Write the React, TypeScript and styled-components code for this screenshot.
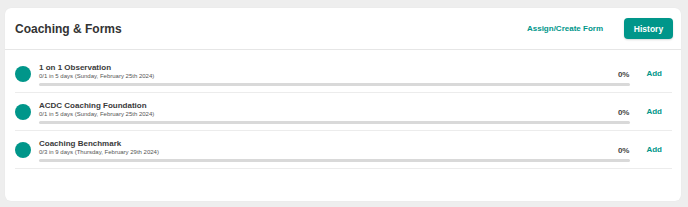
import React from "react";
import styled, { createGlobalStyle } from "styled-components";

const Global = createGlobalStyle`
  html, body { margin: 0; padding: 0; background: #eeeeee; }
  body { font-family: "Liberation Sans", Arial, sans-serif; }
  * { box-sizing: border-box; }
`;

const TEAL = "#00968a";

const Page = styled.div`
  padding: 8px 7px 6px 5px;
`;

const Card = styled.section`
  background: #ffffff;
  border-radius: 6px;
  height: 193px;
  box-shadow: 0 0 1px rgba(0, 0, 0, 0.08);
  display: flex;
  flex-direction: column;
`;

const Header = styled.header`
  height: 42px;
  border-bottom: 1px solid #e6e6e6;
  display: flex;
  align-items: center;
  padding: 0 8px 0 10px;
`;

const Title = styled.h2`
  margin: 0;
  flex: 1;
  font-size: 12px;
  font-weight: 700;
  color: #333333;
`;

const LinkButton = styled.button`
  border: 0;
  background: none;
  padding: 0;
  font-family: inherit;
  font-size: 8px;
  font-weight: 700;
  color: ${TEAL};
  cursor: pointer;
`;

const PrimaryButton = styled.button`
  margin-left: 21px;
  width: 49px;
  height: 21px;
  border: 0;
  border-radius: 4px;
  background: ${TEAL};
  color: #ffffff;
  font-family: inherit;
  font-size: 8.5px;
  font-weight: 700;
  box-shadow: 0 1px 2px rgba(0, 0, 0, 0.15);
`;

const List = styled.div`
  padding: 5px 9px 0 10px;
`;

const Row = styled.div`
  height: 38px;
  border-bottom: 1px solid #ececec;
  display: flex;
  align-items: center;
`;

const Dot = styled.span`
  width: 16px;
  height: 16px;
  border-radius: 50%;
  background: ${TEAL};
  flex: none;
  margin-right: 8px;
`;

const Body = styled.div`
  flex: 1;
  display: flex;
  flex-direction: column;
  margin-top: 2px;
`;

const TopLine = styled.div`
  display: flex;
  align-items: flex-end;
`;

const Texts = styled.div`
  flex: 1;
  display: flex;
  flex-direction: column;
`;

const ItemTitle = styled.div`
  font-size: 8px;
  line-height: 10px;
  font-weight: 700;
  color: #3a3a3a;
`;

const ItemSub = styled.div`
  font-size: 6px;
  line-height: 6px;
  color: #555555;
`;

const Percent = styled.div`
  font-size: 8px;
  line-height: 10px;
  font-weight: 700;
  color: #444444;
  margin-right: 1px;
  margin-bottom: -1px;
`;

const Bar = styled.div`
  margin-top: 4px;
  height: 3px;
  border-radius: 2px;
  background: #d9d9d9;
`;

const AddLink = styled(LinkButton)`
  font-size: 8px;
  margin: 0 10px 0 16px;
`;

const items = [
  { title: "1 on 1 Observation", sub: "0/1 in 5 days (Sunday, February 25th 2024)" },
  { title: "ACDC Coaching Foundation", sub: "0/1 in 5 days (Sunday, February 25th 2024)" },
  { title: "Coaching Benchmark", sub: "0/3 in 9 days (Thursday, February 29th 2024)" },
];

export default function App() {
  return (
    <>
      <Global />
      <Page>
        <Card>
          <Header>
            <Title>Coaching &amp; Forms</Title>
            <LinkButton>Assign/Create Form</LinkButton>
            <PrimaryButton>History</PrimaryButton>
          </Header>
          <List>
            {items.map((it) => (
              <Row key={it.title}>
                <Dot />
                <Body>
                  <TopLine>
                    <Texts>
                      <ItemTitle>{it.title}</ItemTitle>
                      <ItemSub>{it.sub}</ItemSub>
                    </Texts>
                    <Percent>0%</Percent>
                  </TopLine>
                  <Bar />
                </Body>
                <AddLink>Add</AddLink>
              </Row>
            ))}
          </List>
        </Card>
      </Page>
    </>
  );
}
